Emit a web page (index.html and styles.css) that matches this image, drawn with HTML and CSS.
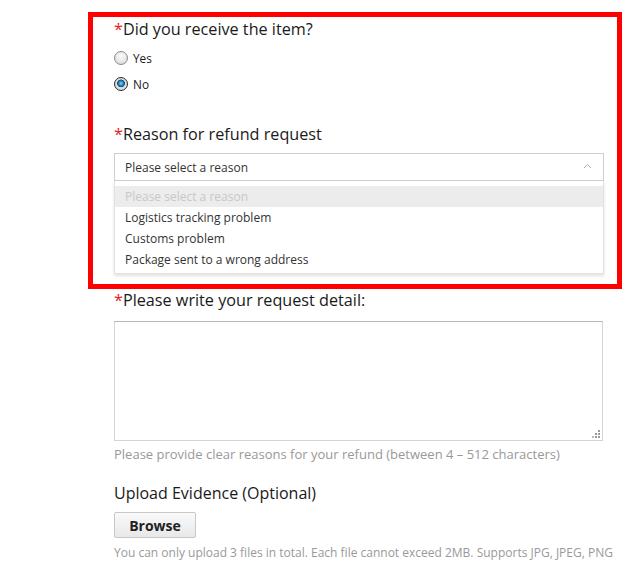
FILE: index.html
```html
<!DOCTYPE html>
<html>
<head>
<meta charset="utf-8">
<link rel="stylesheet" href="styles.css">
</head>
<body>
<div class="page">
  <div class="highlight">
    <div class="q-title"><span class="req">*</span>Did you receive the item?</div>
    <div class="radios">
      <label class="radio"><span class="dot"></span>Yes</label>
      <label class="radio"><span class="dot checked"></span>No</label>
    </div>
    <div class="q-title reason"><span class="req">*</span>Reason for refund request</div>
    <div class="select">
      <span>Please select a reason</span>
      <svg class="chev" width="9" height="6" viewBox="0 0 9 6"><path d="M1 5 L4.5 1.5 L8 5" fill="none" stroke="#aaa" stroke-width="1"/></svg>
    </div>
    <ul class="options">
      <li class="placeholder">Please select a reason</li>
      <li>Logistics tracking problem</li>
      <li>Customs problem</li>
      <li>Package sent to a wrong address</li>
    </ul>
  </div>
  <div class="section">
    <div class="q-title detail"><span class="req">*</span>Please write your request detail:</div>
    <div class="textarea-wrap">
      <textarea class="textarea"></textarea>
      <svg class="grip" width="9" height="9" viewBox="0 0 9 9">
        <rect x="7" y="1" width="2" height="2" fill="#999"/>
        <rect x="4" y="4" width="2" height="2" fill="#999"/>
        <rect x="7" y="4" width="2" height="2" fill="#999"/>
        <rect x="1" y="7" width="2" height="2" fill="#bbb"/>
        <rect x="4" y="7" width="2" height="2" fill="#999"/>
        <rect x="7" y="7" width="2" height="2" fill="#999"/>
      </svg>
    </div>
    <div class="hint">Please provide clear reasons for your refund (between 4 – 512 characters)</div>
    <div class="upload-title">Upload Evidence (Optional)</div>
    <button class="browse">Browse</button>
    <div class="hint small">You can only upload 3 files in total. Each file cannot exceed 2MB. Supports JPG, JPEG, PNG</div>
  </div>
</div>
</body>
</html>
```
FILE: styles.css
```css
html, body {
  margin: 0;
  padding: 0;
  background: #fff;
}
body {
  font-family: "Open Sans", "DejaVu Sans", sans-serif;
  color: #333;
  width: 637px;
  height: 564px;
  overflow: hidden;
}
.page {
  padding-top: 12px;
}
.highlight {
  margin-left: 88px;
  border: 5px solid #ff0000;
  padding: 0 13px 10px 21px;
  box-sizing: border-box;
  width: 534px;
}
.q-title {
  font-size: 16.2px;
  line-height: 24px;
  color: #1a1a1a;
}
.req {
  color: #e0251b;
}
.radios {
  display: flex;
  flex-direction: column;
  gap: 8px;
  margin-top: 8px;
}
.radio {
  display: flex;
  align-items: center;
  font-size: 11.8px;
  line-height: 18px;
  color: #1a1a1a;
  gap: 5px;
}
.dot {
  width: 14px;
  height: 14px;
  border-radius: 50%;
  border: 1px solid #8a8a8a;
  background: radial-gradient(circle at 50% 35%, #fafafa 0%, #e6e6e6 60%, #d0d0d0 100%);
  box-sizing: border-box;
}
.dot.checked {
  border: 1px solid #2b2b2b;
  background: radial-gradient(circle at 50% 45%, #8fd0f5 0%, #2a86c6 25%, #0f4a75 40%, #e0e0e0 47%, #cfcfcf 100%);
}
.reason {
  margin-top: 29px;
}
.select {
  margin-top: 7px;
  height: 28px;
  border: 1px solid #cfcfcf;
  box-sizing: border-box;
  display: flex;
  align-items: center;
  justify-content: space-between;
  padding: 0 11px 0 10px;
  font-size: 12px;
  color: #333;
}
.chev {
  margin-top: -2px;
}
.options {
  list-style: none;
  margin: 0;
  padding: 5px 0 3px;
  border: 1px solid #e2e2e2;
  border-top: none;
  box-shadow: 0 2px 3px rgba(0,0,0,0.12);
  font-size: 12px;
  color: #333;
}
.options li {
  height: 21px;
  line-height: 21px;
  padding-left: 10px;
}
.options li.placeholder {
  background: #ececec;
  color: #c8c8c8;
}
.section {
  margin-left: 114px;
  margin-top: -1px;
  width: 489px;
}
.textarea-wrap {
  position: relative;
  margin-top: 9px;
  height: 120px;
}
.textarea {
  display: block;
  width: 100%;
  height: 120px;
  box-sizing: border-box;
  border: 1px solid #d4d4d4;
  border-top-color: #b8b8b8;
  resize: none;
  margin: 0;
  outline: none;
}
.grip {
  position: absolute;
  right: 3px;
  bottom: 3px;
}
.hint {
  font-size: 13px;
  color: #999;
  line-height: 18px;
  margin-top: 4px;
  white-space: nowrap;
}
.upload-title {
  font-size: 16px;
  color: #1a1a1a;
  line-height: 22px;
  margin-top: 19px;
}
.browse {
  display: block;
  margin-top: 8px;
  width: 82px;
  height: 26px;
  border: 1px solid #c8c8c8;
  border-radius: 2px;
  background: linear-gradient(#fafafa, #e8e8e8);
  font-family: "Open Sans", sans-serif;
  font-weight: 700;
  font-size: 14px;
  color: #222;
  padding: 0;
}
.hint.small {
  font-size: 12px;
  margin-top: 6px;
}
```
